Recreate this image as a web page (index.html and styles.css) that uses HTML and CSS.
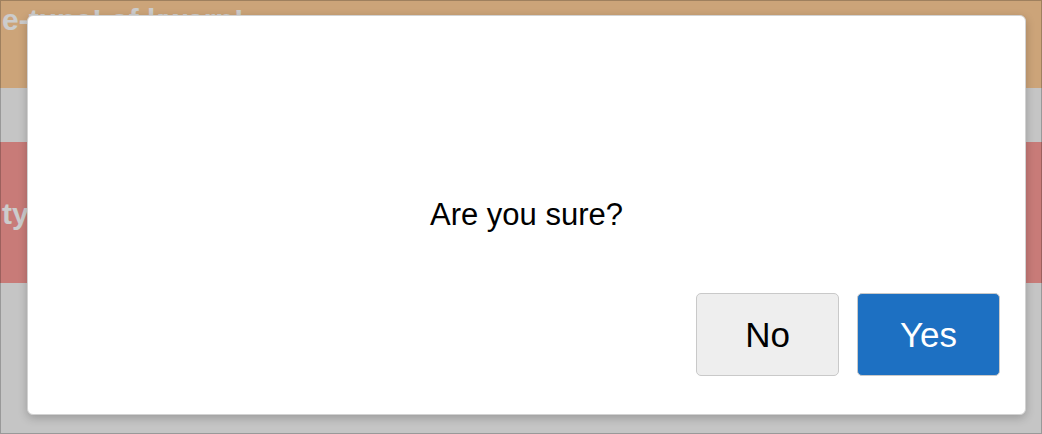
FILE: index.html
```html
<!DOCTYPE html>
<html lang="en">
<head>
<meta charset="utf-8">
<title>Confirm</title>
<link rel="stylesheet" href="styles.css">
</head>
<body>
<div class="page">
  <div class="band band-tan"><span class="band-text">e-tune! of kwarn!</span></div>
  <div class="band band-gray"></div>
  <div class="band band-red"><span class="band-text">type</span></div>
  <div class="band band-gray band-fill"></div>
</div>
<div class="overlay"></div>
<div class="modal" role="dialog" aria-modal="true">
  <div class="modal-body">Are you sure?</div>
  <div class="modal-footer">
    <button class="btn btn-no">No</button>
    <button class="btn btn-yes">Yes</button>
  </div>
</div>
</body>
</html>
```

FILE: styles.css
```css
html, body {
  margin: 0;
  padding: 0;
  width: 1042px;
  height: 434px;
  overflow: hidden;
  font-family: "Liberation Sans", Arial, Helvetica, sans-serif;
}

.page {
  display: flex;
  flex-direction: column;
  width: 1042px;
  height: 434px;
}

.band {
  display: flex;
  align-items: center;
  overflow: hidden;
}

.band-tan {
  height: 88px;
  background: #ffce98;
  align-items: flex-start;
}

.band-gray {
  height: 54px;
  background: #f7f7f7;
}

.band-red {
  height: 141px;
  background: #fa9a96;
}

.band-fill {
  flex: 1;
}

.band-text {
  color: #ffffff;
  font-weight: bold;
  font-size: 30px;
  line-height: 30px;
  padding-left: 2px;
  white-space: nowrap;
}

.band-tan .band-text {
  margin-top: 5px;
}

.band-red .band-text {
  margin-top: 2px;
}

.overlay {
  position: absolute;
  inset: 0;
  background: rgba(0, 0, 0, 0.2);
  border: 1px solid rgba(0, 0, 0, 0.22);
}

.modal {
  position: absolute;
  left: 27px;
  top: 15px;
  width: 999px;
  height: 400px;
  box-sizing: border-box;
  background: #ffffff;
  border: 1px solid #d2d2d2;
  border-radius: 6px;
  box-shadow: 0 3px 10px rgba(0, 0, 0, 0.22);
  display: flex;
  flex-direction: column;
}

.modal-body {
  flex: 1;
  padding-top: 181px;
  text-align: center;
  font-size: 31px;
  line-height: 35px;
  color: #000000;
}

.modal-footer {
  display: flex;
  justify-content: flex-end;
  gap: 18px;
  padding: 0 25px 38px 0;
}

.btn {
  width: 143px;
  height: 83px;
  box-sizing: border-box;
  border: 1px solid #c9c9c9;
  border-radius: 5px;
  font-family: "Liberation Sans", Arial, Helvetica, sans-serif;
  font-size: 35px;
  padding: 0;
  cursor: pointer;
}

.btn-no {
  background: #eeeeee;
  color: #000000;
}

.btn-yes {
  background: #1d70c2;
  color: #ffffff;
}
```
